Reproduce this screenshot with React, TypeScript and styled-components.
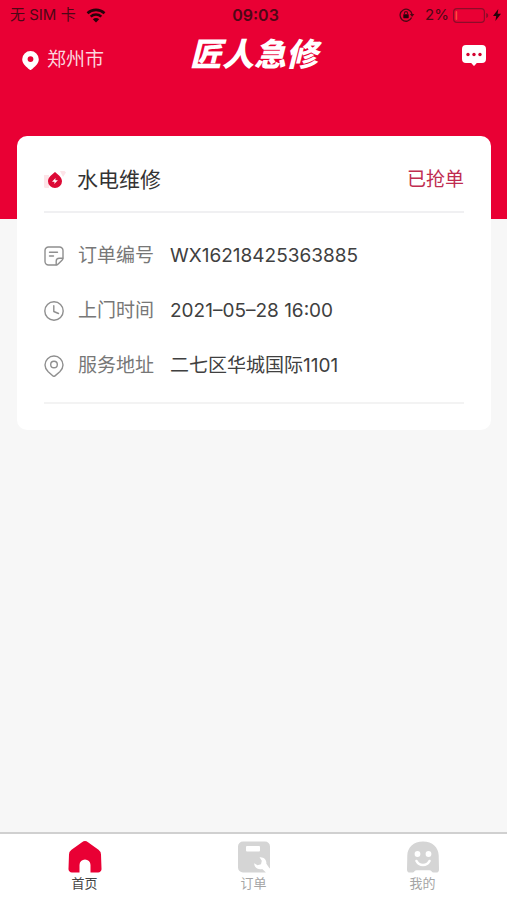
import React from "react";
import styled, { createGlobalStyle } from "styled-components";

const GlobalStyle = createGlobalStyle`
  * { box-sizing: border-box; }
  body {
    margin: 0;
    background: #f7f7f7;
    font-family: Inter, "Noto Sans CJK SC", sans-serif;
  }
  h1, h2, dl, dt, dd { margin: 0; font-weight: 400; }
  svg { display: block; flex: none; }
`;

const Page = styled.div`
  min-height: 100vh;
  display: flex;
  flex-direction: column;
`;

const Header = styled.header`
  background: #e90034;
  padding-bottom: 139px;
`;

const StatusBar = styled.div`
  height: 30px;
  padding: 0 6px 0 10px;
  display: grid;
  grid-template-columns: 1fr auto 1fr;
  align-items: center;
  color: #4d0715;
  font-size: 15px;
  line-height: 20px;
`;

const StatusGroup = styled.div<{ $end?: boolean }>`
  display: flex;
  align-items: center;
  gap: 10px;
  justify-content: ${(p) => (p.$end ? "flex-end" : "flex-start")};
`;

const BatteryStatus = styled.div`
  display: flex;
  align-items: center;
  gap: 4px;
`;

const Clock = styled.time`
  font-size: 16px;
  font-weight: 600;
`;

const NavBar = styled.div`
  height: 50px;
  padding: 0 21px 0 22px;
  display: grid;
  grid-template-columns: 1fr auto 1fr;
  align-items: center;
  color: #fff;
`;

const City = styled.button`
  display: flex;
  align-items: center;
  justify-self: start;
  gap: 8px;
  padding: 10px 0 0;
  border: 0;
  background: none;
  color: #fbd5de;
  font: inherit;
  font-size: 19px;
  line-height: 28px;
`;

const Brand = styled.h1`
  && {
    padding-bottom: 6px;
    font-family: "Noto Sans CJK SC", sans-serif;
    font-size: 32px;
    font-weight: 900;
    font-style: italic;
    line-height: 44px;
  }
`;

const MessageButton = styled.button`
  justify-self: end;
  padding: 0;
  border: 0;
  background: none;
  color: #fff;
`;

const Main = styled.main`
  flex: 1;
  padding: 0 16px 0 17px;
  margin-top: -83px;
`;

const Card = styled.article`
  padding: 0 27px 26px;
  border-radius: 10px;
  background: #fff;
`;

const CardHead = styled.div`
  height: 77px;
  padding-top: 13px;
  display: flex;
  align-items: center;
  gap: 11px;
  border-bottom: 2px solid #f0f0f2;
`;

const CardTitle = styled.h2`
  flex: 1;
  color: #333;
  font-size: 21px;
  line-height: 30px;
`;

const OrderState = styled.span`
  color: #c02c50;
  font-size: 19px;
  line-height: 28px;
`;

const Details = styled.dl`
  padding: 15px 0 9px;
  border-bottom: 2px solid #f3f3f3;
`;

const DetailRow = styled.div`
  height: 55px;
  display: flex;
  align-items: center;
  color: #777;
  font-size: 19px;
  line-height: 28px;
`;

const DetailLabel = styled.dt`
  margin: 0 16px 0 14px;
`;

const DetailValue = styled.dd`
  color: #404040;
`;

const TabBar = styled.nav`
  height: 68px;
  display: grid;
  grid-template-columns: repeat(3, 1fr);
  border-top: 2px solid #d0d0d0;
  background: #fff;
`;

const Tab = styled.a<{ $active?: boolean }>`
  display: flex;
  flex-direction: column;
  align-items: center;
  padding-top: 7px;
  color: ${(p) => (p.$active ? "#444" : "#a5a5a5")};
  font-size: 13px;
  line-height: 20px;
  text-decoration: none;
`;

const WifiIcon = () => (
  <svg width="20" height="15" viewBox="0 0 20 15" fill="none" stroke="#26020a" strokeWidth="2.6">
    <path d="M1.5 5.2C6.3.7 13.7.7 18.5 5.2" />
    <path d="M4.7 8.6c3-2.8 7.6-2.8 10.6 0" />
    <path d="M10 14.5 6.8 11.3c1.8-1.6 4.6-1.6 6.4 0z" fill="#26020a" stroke="none" />
  </svg>
);

const RotationLockIcon = () => (
  <svg width="16" height="14" viewBox="0 0 16 14" fill="none" stroke="#4d0715">
    <path d="M12.6 9.6A6 6 0 1 1 13 6.2" strokeWidth="1.3" />
    <path d="M10.8 6h4.600l-2.300 3z" fill="#4d0715" stroke="none" />
    <rect x="4.3" y="6.2" width="5.4" height="4" rx=".6" fill="#26020a" stroke="none" />
    <path d="M5.4 6.4V5.2a1.6 1.6 0 0 1 3.2 0v1.2" strokeWidth="1.1" />
  </svg>
);

const BatteryIcon = () => (
  <svg width="36" height="15" viewBox="0 0 36 15" fill="none">
    <rect x=".6" y=".6" width="30.8" height="13.8" rx="3.4" stroke="#8d0c29" strokeWidth="1.2" />
    <rect x="2.6" y="3" width="1.6" height="9" rx=".8" fill="#ff4b3c" />
    <path d="M33.2 5v5c1.6-.5 2-1.4 2-2.5s-.4-2-2-2.5z" fill="#8d0c29" />
  </svg>
);

const BoltIcon = () => (
  <svg width="8" height="12" viewBox="0 0 8 12" fill="#26020a">
    <path d="M5.3 0 0 7h3.2L2.4 12 8 4.8H4.6z" />
  </svg>
);

const PinIcon = () => (
  <svg width="17" height="19" viewBox="0 0 17 19" fill="#fff">
    <path
      fillRule="evenodd"
      d="M8.5 0A8.300 8.300 0 0 0 .2 8.200c0 4.600 4.600 7.800 7.300 10.400a1.500 1.500 0 0 0 2 0c2.700-2.600 7.300-5.800 7.300-10.400A8.300 8.300 0 0 0 8.500 0zm0 5.200a2.900 2.900 0 1 1 0 5.800 2.900 2.900 0 0 1 0-5.800z"
    />
  </svg>
);

const MessageIcon = () => (
  <svg width="24" height="21" viewBox="0 0 24 21" fill="#fff">
    <path d="M4 0h16a4 4 0 0 1 4 4v10a4 4 0 0 1-4 4h-5.200L12.800 20.300a1 1 0 0 1-1.600 0L9.200 18H4a4 4 0 0 1-4-4V4a4 4 0 0 1 4-4z" />
    <g fill="#d3002f">
      <circle cx="6" cy="9.5" r="1.7" />
      <circle cx="12" cy="9.5" r="1.7" />
      <circle cx="18" cy="9.5" r="1.7" />
    </g>
  </svg>
);

const DropIcon = () => (
  <svg width="22" height="18" viewBox="0 0 22 18">
    <path d="M0 4h5v13H1.500A1.500 1.500 0 0 1 0 15.500zM16 0h4.500L22 1.500 19 6z" fill="#fde4e8" />
    <path d="M11 1c2.200 2 7 5 7 9.300a7 6.700 0 0 1-14 0C4 6 8.800 3 11 1z" fill="#dc0a36" />
    <path d="M11.600 7 8 10.700h2.600l-.4 2.300 3.700-3.800h-2.600z" fill="#fff" />
  </svg>
);

const NoteIcon = () => (
  <svg width="20" height="20" viewBox="0 0 20 20" fill="none" stroke="#8f8f8f" strokeWidth="1.4" strokeLinecap="round" strokeLinejoin="round">
    <path d="M12 19H4.500A3.500 3.500 0 0 1 1 15.500v-11A3.500 3.500 0 0 1 4.500 1h11A3.500 3.500 0 0 1 19 4.500V12c0 1-.4 1.600-1 2.200L14.200 18c-.6.6-1.200 1-2.200 1z" />
    <path d="M12.200 18.800v-3.500a3 3 0 0 1 3-3h3.600M5.500 6.200h8M5.500 10h4" />
  </svg>
);

const ClockIcon = () => (
  <svg width="20" height="20" viewBox="0 0 20 20" fill="none" stroke="#8f8f8f" strokeWidth="1.4" strokeLinecap="round" strokeLinejoin="round">
    <circle cx="10" cy="10" r="9.2" />
    <path d="M9.800 4.800v5.700l4.700 2" />
  </svg>
);

const AddressIcon = () => (
  <svg width="20" height="22" viewBox="0 0 20 22" fill="none" stroke="#8f8f8f" strokeWidth="1.4" strokeLinejoin="round">
    <path d="M10 1a9 9 0 0 1 9 9c0 3-1.500 5-3.200 6.700L11 20.900a1.500 1.500 0 0 1-2 0l-4.800-4.200C2.500 15 1 13 1 10a9 9 0 0 1 9-9z" />
    <circle cx="10" cy="9.5" r="3.3" />
  </svg>
);

const HomeIcon = () => (
  <svg width="34" height="32" viewBox="0 0 34 32" fill="#e90034">
    <path d="M14 1.200a5 5 0 0 1 6 0l10.500 7.600A6 6 0 0 1 33 13.500l.5 14A3.500 3.500 0 0 1 30 31.500h-7.500V24a5.500 5.500 0 0 0-11 0v7.500H4A3.500 3.500 0 0 1 .5 27.500l.5-14a6 6 0 0 1 2.500-4.700z" />
  </svg>
);

const OrdersIcon = () => (
  <svg width="34" height="32" viewBox="0 0 34 32">
    <path d="M6 .5h22a5 5 0 0 1 5 5v21a5 5 0 0 1-5 5H6a5 5 0 0 1-5-5v-21a5 5 0 0 1 5-5z" fill="#d5d5d5" />
    <rect x="9" y="5" width="14" height="5.5" rx="1" fill="#fff" />
    <path
      d="M22.500 16.300c4-.6 7.300 2.400 6.900 6.400L34 27.500V32h-4.500l-4.300-4.100c-4.300 1.200-8-1.500-8-5.700l3.300 2.100 3.500-1 .8-3.600z"
      fill="#fff"
    />
    <path d="m29.500 22.700 3.500-.7v4.500l-.4 1z" fill="#d5d5d5" />
  </svg>
);

const ProfileIcon = () => (
  <svg width="34" height="32" viewBox="0 0 34 32">
    <path d="M17 .5c9.500 0 15.500 6 15.700 14l.3 14c0 2.500-1.500 3.300-3.300 3h-2.200c-1.800-.1-2.200-2.300-4-2.300h-13c-1.800 0-2.200 2.200-4 2.300H4.300c-1.800.3-3.300-.5-3.300-3l.3-14C1.500 6.500 7.500.5 17 .5z" fill="#d5d5d5" />
    <circle cx="11.5" cy="13" r="2.9" fill="#fff" />
    <circle cx="22.5" cy="13" r="2.9" fill="#fff" />
    <path d="M10.500 20c2.800 5.300 10.200 5.300 13 0" fill="none" stroke="#fff" strokeWidth="2.6" strokeLinecap="round" />
  </svg>
);

const details = [
  { label: "订单编号", value: "WX16218425363885", Icon: NoteIcon },
  { label: "上门时间", value: "2021–05–28 16:00", Icon: ClockIcon },
  { label: "服务地址", value: "二七区华城国际1101", Icon: AddressIcon },
];

const tabs = [
  { label: "首页", href: "#home", Icon: HomeIcon },
  { label: "订单", href: "#orders", Icon: OrdersIcon },
  { label: "我的", href: "#profile", Icon: ProfileIcon },
];

export default function App() {
  return (
    <Page>
      <GlobalStyle />
      <Header>
        <StatusBar>
          <StatusGroup>
            <span>无 SIM 卡</span>
            <WifiIcon />
          </StatusGroup>
          <Clock>09:03</Clock>
          <StatusGroup $end>
            <RotationLockIcon />
            <BatteryStatus>
              <span>2%</span>
              <BatteryIcon />
              <BoltIcon />
            </BatteryStatus>
          </StatusGroup>
        </StatusBar>
        <NavBar>
          <City type="button">
            <PinIcon />
            郑州市
          </City>
          <Brand>匠人急修</Brand>
          <MessageButton type="button" aria-label="消息">
            <MessageIcon />
          </MessageButton>
        </NavBar>
      </Header>
      <Main>
        <Card>
          <CardHead>
            <DropIcon />
            <CardTitle>水电维修</CardTitle>
            <OrderState>已抢单</OrderState>
          </CardHead>
          <Details>
            {details.map(({ label, value, Icon }) => (
              <DetailRow key={label}>
                <Icon />
                <DetailLabel>{label}</DetailLabel>
                <DetailValue>{value}</DetailValue>
              </DetailRow>
            ))}
          </Details>
        </Card>
      </Main>
      <TabBar>
        {tabs.map(({ label, href, Icon }, i) => (
          <Tab key={label} href={href} $active={i === 0}>
            <Icon />
            {label}
          </Tab>
        ))}
      </TabBar>
    </Page>
  );
}
